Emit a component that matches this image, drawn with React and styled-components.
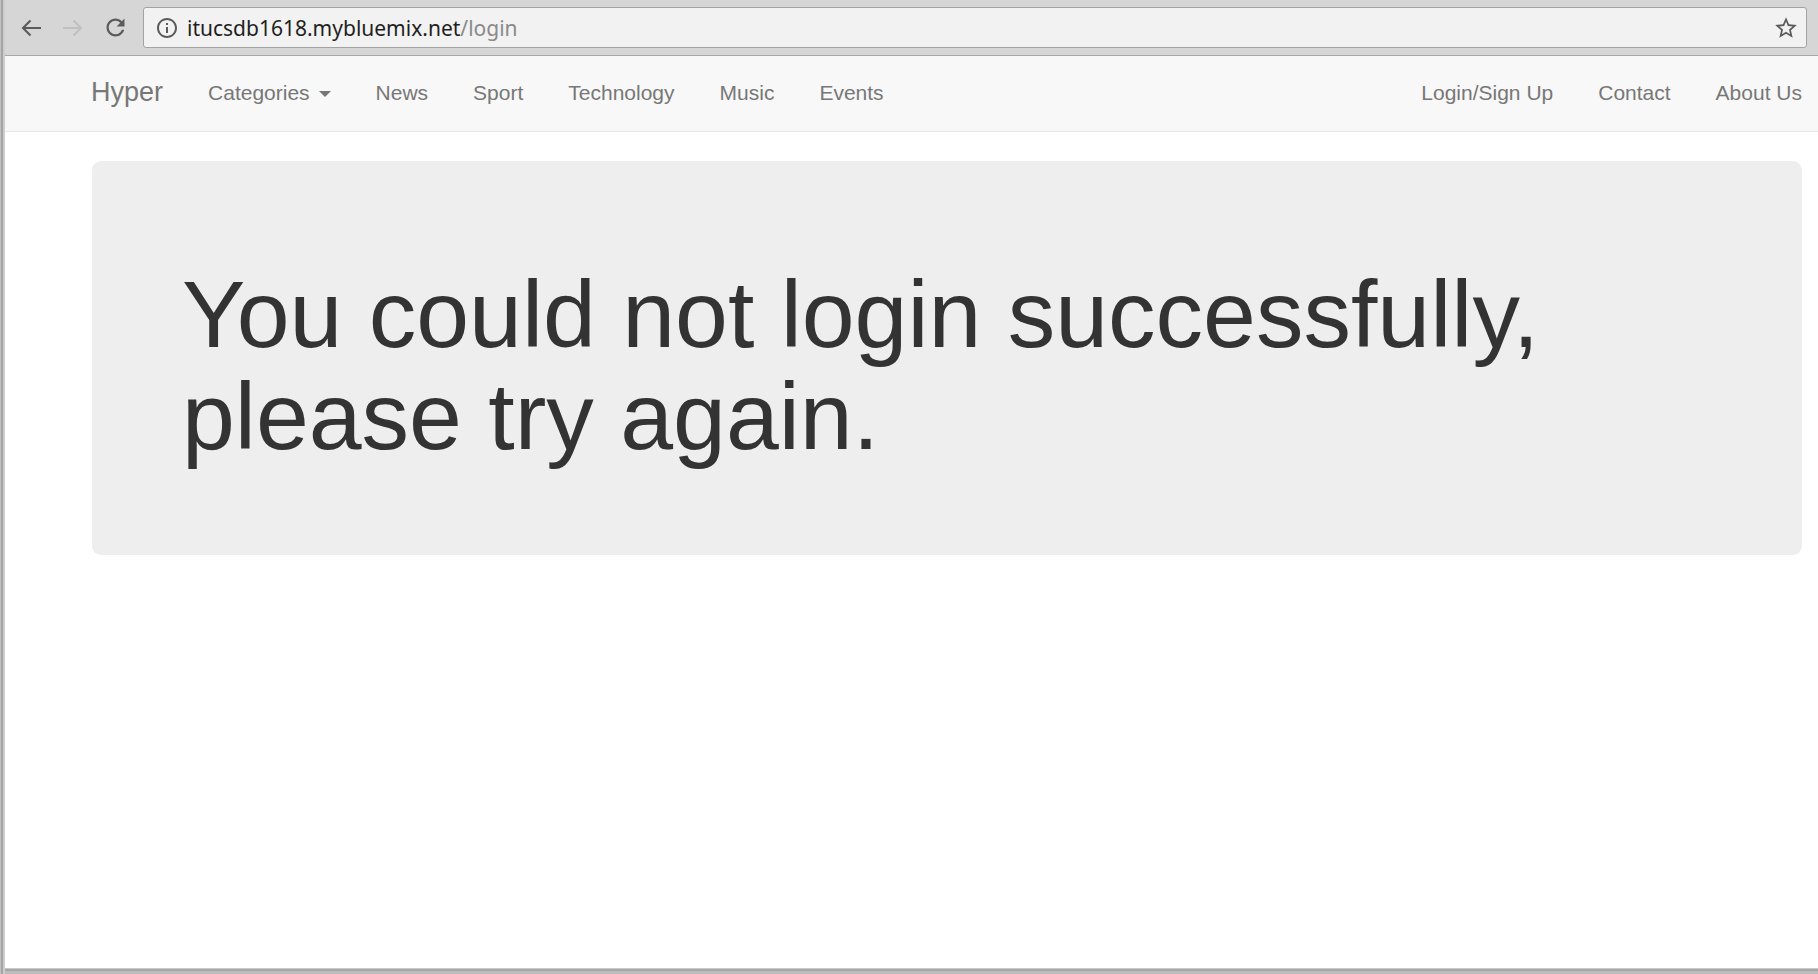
import React from "react";
import styled, { createGlobalStyle } from "styled-components";

const GlobalStyle = createGlobalStyle`
    html, body {
        margin: 0;
        padding: 0;
        background: #ffffff;
    }
    body {
        font-family: "Liberation Sans", Arial, sans-serif;
        overflow: hidden;
    }
`;

const Frame = styled.div`
    display: flex;
    width: 1818px;
    height: 974px;
    overflow: hidden;
`;

const FrameSide = styled.div`
    flex: 0 0 5px;
    background: linear-gradient(to right, #c2c2c2 0 1px, #a4a4a4 1px 3px, #cdcdcd 3px 5px);
`;

const Window = styled.div`
    flex: 1;
    display: flex;
    flex-direction: column;
    min-width: 0;
`;

const FrameBottom = styled.div`
    flex: 0 0 6px;
    background: linear-gradient(to bottom, #c8c8c8 0 1px, #a6a6a6 1px 3px, #bdbdbd 3px 6px);
`;

const Toolbar = styled.div`
    flex: 0 0 55px;
    display: flex;
    align-items: center;
    padding: 0 11px 0 8px;
    background: #d6d6d6;
    border-bottom: 1px solid #a9a9a9;
`;

const ToolButton = styled.div`
    width: 36px;
    height: 36px;
    display: flex;
    align-items: center;
    justify-content: center;
    margin-right: ${(p) => p.$gap || 5}px;
    color: ${(p) => (p.$disabled ? "#c0c0c0" : "#5b5b5b")};
`;

const AddressBar = styled.div`
    flex: 1;
    height: 41px;
    box-sizing: border-box;
    margin-left: 4px;
    display: flex;
    align-items: center;
    padding: 0 7px 0 11px;
    background: #f2f2f2;
    border: 1px solid #a3a3a3;
    border-radius: 3px;
    color: #5b5b5b;
`;

const Url = styled.div`
    flex: 1;
    margin-left: 8px;
    font-family: "Noto Sans", sans-serif;
    font-size: 21px;
    color: #1f1f1f;
    white-space: nowrap;
`;

const UrlPath = styled.span`
    color: #8a8a8a;
`;

const Page = styled.div`
    flex: 1;
    background: #ffffff;
    min-height: 0;
`;

const Navbar = styled.nav`
    height: 75px;
    background: #f8f8f8;
    border-bottom: 1px solid #e7e7e7;
    margin-bottom: 29px;
`;

const Container = styled.div`
    width: 1710px;
    height: 73px;
    padding: 0 0 2px 87px;
    display: flex;
    align-items: center;
`;

const Brand = styled.a`
    font-size: 27px;
    color: #777777;
    padding-right: 22.5px;
    margin-left: -1px;
    text-decoration: none;
`;

const NavList = styled.ul`
    list-style: none;
    margin: 0;
    margin-right: ${(p) => (p.$right ? "-22.5px" : "0")};
    margin-left: ${(p) => (p.$right ? "auto" : "0")};
    padding: 0;
    display: flex;
    align-items: center;
`;

const NavLink = styled.li`
    padding: 0 22.5px;
    font-size: 21px;
    line-height: 30px;
    color: #777777;
    display: flex;
    align-items: center;
`;

const Caret = styled.span`
    display: inline-block;
    width: 0;
    height: 0;
    margin-left: 9px;
    margin-top: 2px;
    border-top: 6px solid #777777;
    border-left: 6px solid transparent;
    border-right: 6px solid transparent;
`;

const Jumbotron = styled.div`
    width: 1710px;
    box-sizing: border-box;
    margin-left: 87px;
    padding: 72px 90px;
    background: #eeeeee;
    border-radius: 9px;
`;

const Heading = styled.h1`
    margin: 30px 0 16px;
    font-size: 95px;
    line-height: 102px;
    font-weight: 400;
    color: #333333;
`;

const BackIcon = ({ flip }) => (
    <svg width="21" height="18" viewBox="0 0 21 18" style={flip ? { transform: "scaleX(-1)" } : undefined}>
        <path d="M2 9H20M9.5 1.5L2 9l7.5 7.5" fill="none" stroke="currentColor" strokeWidth="2.1" />
    </svg>
);

const ReloadIcon = () => (
    <svg width="27" height="27" viewBox="0 0 24 24">
        <path
            fill="currentColor"
            d="M17.65 6.35C16.2 4.9 14.21 4 12 4c-4.42 0-7.99 3.58-7.99 8s3.57 8 7.99 8c3.730 0 6.84-2.55 7.73-6h-2.08c-.82 2.33-3.04 4-5.65 4-3.31 0-6-2.69-6-6s2.69-6 6-6c1.66 0 3.14.69 4.22 1.78L13 11h7V4l-2.35 2.35z"
        />
    </svg>
);

const InfoIcon = () => (
    <svg width="24" height="24" viewBox="0 0 24 24">
        <path
            fill="currentColor"
            d="M11 7h2v2h-2zm0 4h2v6h-2zm1-9C6.48 2 2 6.48 2 12s4.48 10 10 10 10-4.48 10-10S17.52 2 12 2zm0 18c-4.41 0-8-3.59-8-8s3.590-8 8-8 8 3.59 8 8-3.59 8-8 8z"
        />
    </svg>
);

const StarIcon = () => (
    <svg width="26" height="26" viewBox="0 0 24 24">
        <path
            fill="currentColor"
            d="M22 9.24l-7.19-.62L12 2 9.19 8.63 2 9.24l5.46 4.73L5.82 21 12 17.27 18.18 21l-1.63-7.03L22 9.24zM12 15.4l-3.76 2.27 1-4.28-3.32-2.88 4.38-.38L12 6.1l1.71 4.04 4.38.38-3.32 2.88 1 4.28L12 15.4z"
        />
    </svg>
);

const App = () => {
    return (
        <>
            <GlobalStyle />
            <Frame>
                <FrameSide />
                <Window>
                    <Toolbar>
                        <ToolButton>
                            <BackIcon />
                        </ToolButton>
                        <ToolButton $disabled $gap={7}>
                            <BackIcon flip />
                        </ToolButton>
                        <ToolButton $gap={6}>
                            <ReloadIcon />
                        </ToolButton>
                        <AddressBar>
                            <InfoIcon />
                            <Url>
                                itucsdb1618.mybluemix.net<UrlPath>/login</UrlPath>
                            </Url>
                            <StarIcon />
                        </AddressBar>
                    </Toolbar>
                    <Page>
                        <Navbar>
                            <Container>
                                <Brand>Hyper</Brand>
                                <NavList>
                                    <NavLink>
                                        Categories <Caret />
                                    </NavLink>
                                    <NavLink>News</NavLink>
                                    <NavLink>Sport</NavLink>
                                    <NavLink>Technology</NavLink>
                                    <NavLink>Music</NavLink>
                                    <NavLink>Events</NavLink>
                                </NavList>
                                <NavList $right>
                                    <NavLink>Login/Sign Up</NavLink>
                                    <NavLink>Contact</NavLink>
                                    <NavLink>About Us</NavLink>
                                </NavList>
                            </Container>
                        </Navbar>
                        <Jumbotron>
                            <Heading>
                                You could not login successfully,
                                <br />
                                please try again.
                            </Heading>
                        </Jumbotron>
                    </Page>
                    <FrameBottom />
                </Window>
            </Frame>
        </>
    );
};

export default App;
